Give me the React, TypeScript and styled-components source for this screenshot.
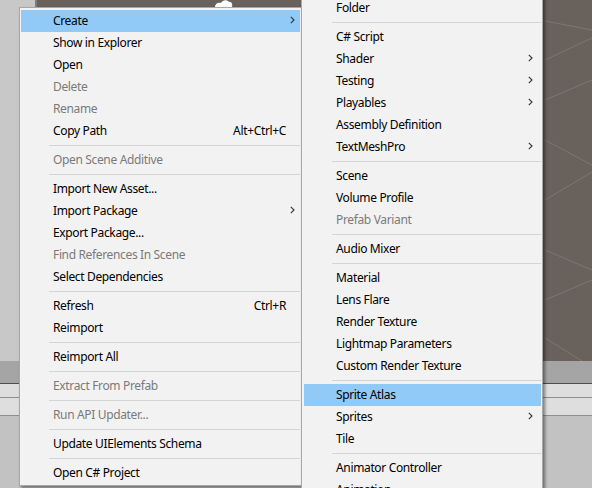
import React from "react";
import styled, { createGlobalStyle } from "styled-components";

const GlobalStyle = createGlobalStyle`
  html, body {
    margin: 0;
    padding: 0;
    background: #c2c2c2;
  }
  body {
    font-family: "Noto Sans", "Open Sans", sans-serif;
  }
`;

interface MenuItem {
  label?: string;
  shortcut?: string;
  sub?: boolean;
  disabled?: boolean;
  active?: boolean;
  sep?: boolean;
}

const mainItems: MenuItem[] = [
  { label: "Create", sub: true, active: true },
  { label: "Show in Explorer" },
  { label: "Open" },
  { label: "Delete", disabled: true },
  { label: "Rename", disabled: true },
  { label: "Copy Path", shortcut: "Alt+Ctrl+C" },
  { sep: true },
  { label: "Open Scene Additive", disabled: true },
  { sep: true },
  { label: "Import New Asset..." },
  { label: "Import Package", sub: true },
  { label: "Export Package..." },
  { label: "Find References In Scene", disabled: true },
  { label: "Select Dependencies" },
  { sep: true },
  { label: "Refresh", shortcut: "Ctrl+R" },
  { label: "Reimport" },
  { sep: true },
  { label: "Reimport All" },
  { sep: true },
  { label: "Extract From Prefab", disabled: true },
  { sep: true },
  { label: "Run API Updater...", disabled: true },
  { sep: true },
  { label: "Update UIElements Schema" },
  { sep: true },
  { label: "Open C# Project" },
];

const createItems: MenuItem[] = [
  { label: "Folder" },
  { sep: true },
  { label: "C# Script" },
  { label: "Shader", sub: true },
  { label: "Testing", sub: true },
  { label: "Playables", sub: true },
  { label: "Assembly Definition" },
  { label: "TextMeshPro", sub: true },
  { sep: true },
  { label: "Scene" },
  { label: "Volume Profile" },
  { label: "Prefab Variant", disabled: true },
  { sep: true },
  { label: "Audio Mixer" },
  { sep: true },
  { label: "Material" },
  { label: "Lens Flare" },
  { label: "Render Texture" },
  { label: "Lightmap Parameters" },
  { label: "Custom Render Texture" },
  { sep: true },
  { label: "Sprite Atlas", active: true },
  { label: "Sprites", sub: true },
  { label: "Tile" },
  { sep: true },
  { label: "Animator Controller" },
  { label: "Animation" },
];

const Editor = styled.div`
  position: relative;
  width: 592px;
  height: 488px;
  overflow: hidden;
  display: flex;
  flex-direction: column;
  background: #c2c2c2;
`;

const ViewRow = styled.div`
  display: flex;
  height: 361px;
`;

const SidePanel = styled.div`
  width: 35px;
  background: #c8c8c8;
  border-right: 2px solid #7d7d7d;
`;

const SceneView = styled.div`
  position: relative;
  flex: 1;
  background: #68615c;
  overflow: hidden;

  svg {
    display: block;
  }
`;

const TabBand = styled.div`
  height: 22px;
  background: #a5a5a5;
  border-bottom: 1px solid #4d4d4d;
`;

const ToolStrip = styled.div<{ $h: number }>`
  height: ${(p) => p.$h}px;
  background: #dedede;
  border-bottom: 1px solid #8f8f8f;
`;

const Menu = styled.div<{ $left: number; $top: number; $width: number; $z: number; $padLeft: number }>`
  position: absolute;
  left: ${(p) => p.$left}px;
  top: ${(p) => p.$top}px;
  width: ${(p) => p.$width}px;
  z-index: ${(p) => p.$z};
  box-sizing: border-box;
  display: flex;
  flex-direction: column;
  background: #f2f2f2;
  border: 1px solid #a8a8a8;
  padding: 2px 1px 1px ${(p) => p.$padLeft}px;
  box-shadow: 2px 2px 3px rgba(0, 0, 0, 0.45);
`;

const Row = styled.div<{ $active?: boolean; $disabled?: boolean; $chevronPad: number }>`
  box-sizing: border-box;
  display: flex;
  align-items: center;
  height: 22px;
  padding: 0 ${(p) => p.$chevronPad}px 2px 32px;
  background: ${(p) => (p.$active ? "#91c9f7" : "transparent")};
  color: ${(p) => (p.$disabled ? "#7a7a7a" : "#000000")};
  font-size: 12px;
  letter-spacing: -0.35px;
  white-space: nowrap;
`;

const Label = styled.span`
  flex: 1;
`;

const Shortcut = styled.span`
  margin-right: 9px;
`;

const Chevron = styled.svg`
  width: 5px;
  height: 8px;
  flex: none;
`;

const Separator = styled.div`
  height: 7px;
  margin-left: 28px;
  display: flex;
  align-items: center;

  &::after {
    content: "";
    flex: 1;
    height: 1px;
    background: #d4d4d4;
  }
`;

const MenuList: React.FC<{ items: MenuItem[]; chevronPad: number }> = ({ items, chevronPad }) => (
  <>
    {items.map((it, i) =>
      it.sep ? (
        <Separator key={i} />
      ) : (
        <Row key={i} $active={it.active} $disabled={it.disabled} $chevronPad={chevronPad}>
          <Label>{it.label}</Label>
          {it.shortcut && <Shortcut>{it.shortcut}</Shortcut>}
          {it.sub && (
            <Chevron viewBox="0 0 5 8">
              <polyline points="0.8,0.8 4,4 0.8,7.2" fill="none" stroke="#333" strokeWidth="1.1" />
            </Chevron>
          )}
        </Row>
      )
    )}
  </>
);

const Grid: React.FC = () => (
  <svg width="555" height="361" viewBox="0 0 555 361">
    <g stroke="#7d7772" strokeWidth="1" fill="none">
      <line x1="508" y1="21" x2="555" y2="30" />
      <line x1="508" y1="60" x2="555" y2="38" />
      <line x1="508" y1="100" x2="555" y2="80" />
      <line x1="508" y1="140" x2="555" y2="165" />
      <line x1="508" y1="200" x2="555" y2="172" />
      <line x1="508" y1="250" x2="555" y2="270" />
      <line x1="508" y1="300" x2="555" y2="280" />
      <line x1="508" y1="338" x2="545" y2="361" />
    </g>
    <path d="M178 7 C178 3 182 2 184 3 C185 0 190 -1 192 2 C194 1 196 4 195 7 Z" fill="#ffffff" />
  </svg>
);

const App: React.FC = () => (
  <>
    <GlobalStyle />
    <Editor>
      <ViewRow>
        <SidePanel />
        <SceneView>
          <Grid />
        </SceneView>
      </ViewRow>
      <TabBand />
      <ToolStrip $h={13} />
      <ToolStrip $h={17} />

      <Menu $left={19} $top={7} $width={283} $z={1} $padLeft={1}>
        <MenuList items={mainItems} chevronPad={5} />
      </Menu>
      <Menu $left={301} $top={-6} $width={242} $z={2} $padLeft={2}>
        <MenuList items={createItems} chevronPad={8} />
      </Menu>
    </Editor>
  </>
);

export default App;
